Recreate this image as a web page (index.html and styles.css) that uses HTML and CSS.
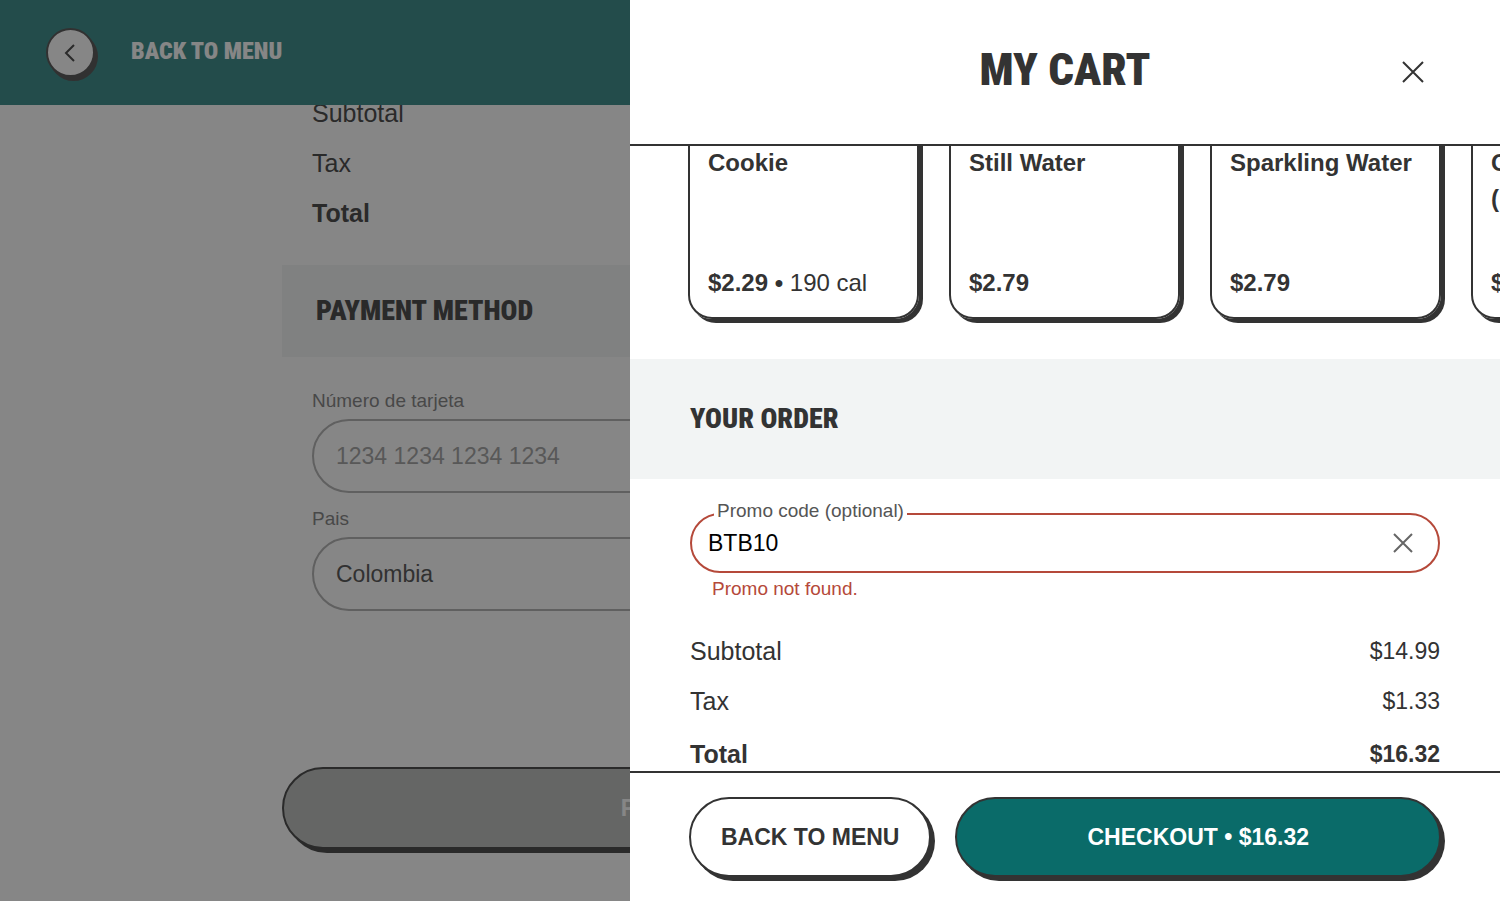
FILE: index.html
```html
<!DOCTYPE html>
<html lang="en">
<head>
  <meta charset="UTF-8">
  <meta name="viewport" content="width=device-width, initial-scale=1">
  <title>My Cart</title>
  <link rel="stylesheet" href="styles.css">
</head>
<body>

  <!-- Checkout page, sits behind the cart -->
  <div class="page">
    <header class="topbar">
      <button type="button" class="back-btn" aria-label="Back">
        <svg width="26" height="26" viewBox="0 0 26 26" fill="none" stroke="currentColor" stroke-width="2"><path d="M16 5 8 13l8 8"/></svg>
      </button>
      <a href="#" class="topbar-link">BACK TO MENU</a>
    </header>

    <main class="checkout">
      <dl class="totals">
        <div class="row"><dt>Subtotal</dt><dd>$14.99</dd></div>
        <div class="row"><dt>Tax</dt><dd>$1.33</dd></div>
        <div class="row total"><dt>Total</dt><dd>$16.32</dd></div>
      </dl>

      <h2 class="band">PAYMENT METHOD</h2>

      <form class="payment">
        <label for="card">Número de tarjeta</label>
        <input type="text" id="card" placeholder="1234 1234 1234 1234">
        <label for="country">Pais</label>
        <select id="country">
          <option>Colombia</option>
        </select>
      </form>

      <button type="button" class="btn btn-disabled">PLACE ORDER • $16.32</button>
    </main>
  </div>

  <div class="overlay"></div>

  <!-- Cart drawer -->
  <aside class="cart" aria-label="My cart">
    <header class="cart-header">
      <h1>MY CART</h1>
      <button type="button" class="icon-btn" aria-label="Close cart">
        <svg width="24" height="24" viewBox="0 0 24 24" fill="none" stroke="currentColor" stroke-width="2"><path d="M2 2l20 20M22 2 2 22"/></svg>
      </button>
    </header>

    <div class="cart-body">
      <div class="cards">
        <article class="card">
          <h3>Cookie</h3>
          <p><b>$2.29 •</b> 190 cal</p>
        </article>
        <article class="card">
          <h3>Still Water</h3>
          <p><b>$2.79</b></p>
        </article>
        <article class="card">
          <h3>Sparkling Water</h3>
          <p><b>$2.79</b></p>
        </article>
        <article class="card">
          <h3>Guacamole<br>(1 oz)</h3>
          <p><b>$2.79</b></p>
        </article>
      </div>

      <h2 class="band">YOUR ORDER</h2>

      <div class="promo">
        <div class="promo-field">
          <label for="promo">Promo code (optional)</label>
          <input type="text" id="promo" value="BTB10">
          <button type="button" class="icon-btn" aria-label="Clear promo code">
            <svg width="22" height="22" viewBox="0 0 22 22" fill="none" stroke="currentColor" stroke-width="2"><path d="M2 2l18 18M20 2 2 20"/></svg>
          </button>
        </div>
        <p class="error">Promo not found.</p>
      </div>

      <dl class="totals">
        <div class="row"><dt>Subtotal</dt><dd>$14.99</dd></div>
        <div class="row"><dt>Tax</dt><dd>$1.33</dd></div>
        <div class="row total"><dt>Total</dt><dd>$16.32</dd></div>
      </dl>
    </div>

    <footer class="cart-footer">
      <button type="button" class="btn">BACK TO MENU</button>
      <button type="button" class="btn btn-primary">CHECKOUT • $16.32</button>
    </footer>
  </aside>

</body>
</html>
```
FILE: styles.css
```css
*, *::before, *::after {
  box-sizing: border-box;
}

body {
  margin: 0;
  background: #fff;
  color: #333;
  font-family: "Liberation Sans", Arial, sans-serif;
  font-size: 25px;
  line-height: 36px;
}

h1, h2, h3, p, dl, dd {
  margin: 0;
}

h1, h2, .topbar-link {
  font-family: "Roboto Condensed", Roboto, "Liberation Sans", sans-serif;
  font-weight: 900;
}

button, input, select {
  font: inherit;
  color: inherit;
}

button {
  cursor: pointer;
}

svg {
  display: block;
}

/* Page behind */
.page {
  height: 100vh;
  display: flex;
  flex-direction: column;
}

.topbar {
  flex: none;
  height: 105px;
  padding: 0 46px;
  display: flex;
  align-items: center;
  gap: 36px;
  background: #257f7d;
}

.back-btn {
  width: 49px;
  height: 49px;
  padding: 0;
  display: flex;
  align-items: center;
  justify-content: center;
  border: 2px solid #444;
  border-radius: 50%;
  background: #fff;
  box-shadow: 3px 4px 0 #444;
}

.topbar-link {
  padding-bottom: 4px;
  color: #fff;
  font-size: 24px;
  text-decoration: none;
}

.checkout {
  flex: 1;
  min-height: 0;
  overflow: hidden;
  width: 936px;
  max-width: 100%;
  margin: 0 auto;
  padding-bottom: 52px;
  display: flex;
  flex-direction: column;
  justify-content: flex-end;
}

.checkout > * {
  flex: none;
}

.row {
  display: flex;
  justify-content: space-between;
  margin-bottom: 14px;
}

.row dd {
  font-size: 23px;
}

.total {
  font-weight: 700;
}

.checkout .totals {
  padding: 0 30px 20px;
}

.band {
  background: #f2f4f4;
  font-size: 28px;
}

.checkout .band {
  padding: 28px 34px;
}

.payment {
  display: flex;
  flex-direction: column;
  padding: 32px 30px 156px;
}

.payment label {
  font-size: 19px;
  line-height: 24px;
  margin-bottom: 6px;
  color: #777;
}

.payment input,
.payment select {
  height: 74px;
  padding: 0 22px;
  border: 2px solid #aaa;
  border-radius: 37px;
  background: transparent;
  color: #444;
  font-size: 23px;
  appearance: none;
}

.payment input {
  margin-bottom: 14px;
}

.payment input::placeholder {
  color: #999;
}

.btn {
  height: 80px;
  padding: 0 30px;
  border: 2px solid #333;
  border-radius: 41px;
  background: #fff;
  box-shadow: 4px 4px 0 #333;
  font-size: 23px;
  font-weight: 700;
  white-space: nowrap;
}

.btn-disabled {
  height: 82px;
  background: #b6b9b7;
  color: #fff;
}

.btn-primary {
  flex: 1;
  background: #0a6b69;
  color: #fff;
}

.overlay {
  position: fixed;
  inset: 0;
  background: rgba(35, 35, 35, 0.55);
}

/* Drawer */
.cart {
  position: fixed;
  top: 0;
  right: 0;
  bottom: 0;
  width: 58%;
  display: flex;
  flex-direction: column;
  background: #fff;
}

.cart-header {
  flex: none;
  height: 146px;
  padding: 0 70px;
  display: grid;
  grid-template-columns: 34px 1fr 34px;
  align-items: center;
  text-align: center;
  border-bottom: 2px solid #333;
}

.cart-header h1 {
  grid-column: 2;
  padding-bottom: 4px;
  font-size: 45px;
  line-height: 56px;
}

.icon-btn {
  padding: 5px;
  border: 0;
  background: none;
}

.cart-body {
  flex: 1;
  min-height: 0;
  overflow: hidden;
  display: flex;
  flex-direction: column;
  justify-content: flex-end;
}

.cart-body > * {
  flex: none;
}

.cards {
  display: flex;
  gap: 30px;
  padding: 0 58px 40px;
}

.card {
  flex: none;
  width: 231px;
  height: 360px;
  padding: 184px 18px 16px;
  display: flex;
  flex-direction: column;
  justify-content: space-between;
  border: 2px solid #333;
  border-radius: 24px;
  box-shadow: 4px 4px 0 #333;
  font-size: 24px;
}

.card h3 {
  font-size: 24px;
}

.cart .band {
  padding: 42px 60px;
}

.promo {
  padding: 34px 60px 32px;
}

.promo-field {
  position: relative;
  height: 60px;
  padding: 0 19px 0 16px;
  display: flex;
  align-items: center;
  border: 2px solid #b5493a;
  border-radius: 30px;
}

/* label sits on the outline */
.promo-field label {
  position: absolute;
  top: -16px;
  left: 22px;
  padding: 0 3px;
  background: #fff;
  color: #555;
  font-size: 19px;
  line-height: 24px;
}

.promo-field input {
  flex: 1;
  min-width: 0;
  padding: 0;
  border: 0;
  outline: 0;
  background: none;
  color: #000;
  font-size: 23px;
}

.promo-field .icon-btn {
  color: #666;
}

.error {
  padding-left: 22px;
  color: #b5493a;
  font-size: 19px;
  line-height: 24px;
  margin-top: 4px;
}

.cart .totals {
  padding: 0 60px;
}

.cart .total {
  margin: 18px 0 0;
  line-height: 34px;
}

.cart .row:nth-child(2) {
  margin-bottom: 0;
}

.cart-footer {
  flex: none;
  height: 130px;
  padding: 0 59px;
  display: flex;
  align-items: center;
  gap: 24px;
  border-top: 2px solid #333;
}
```
